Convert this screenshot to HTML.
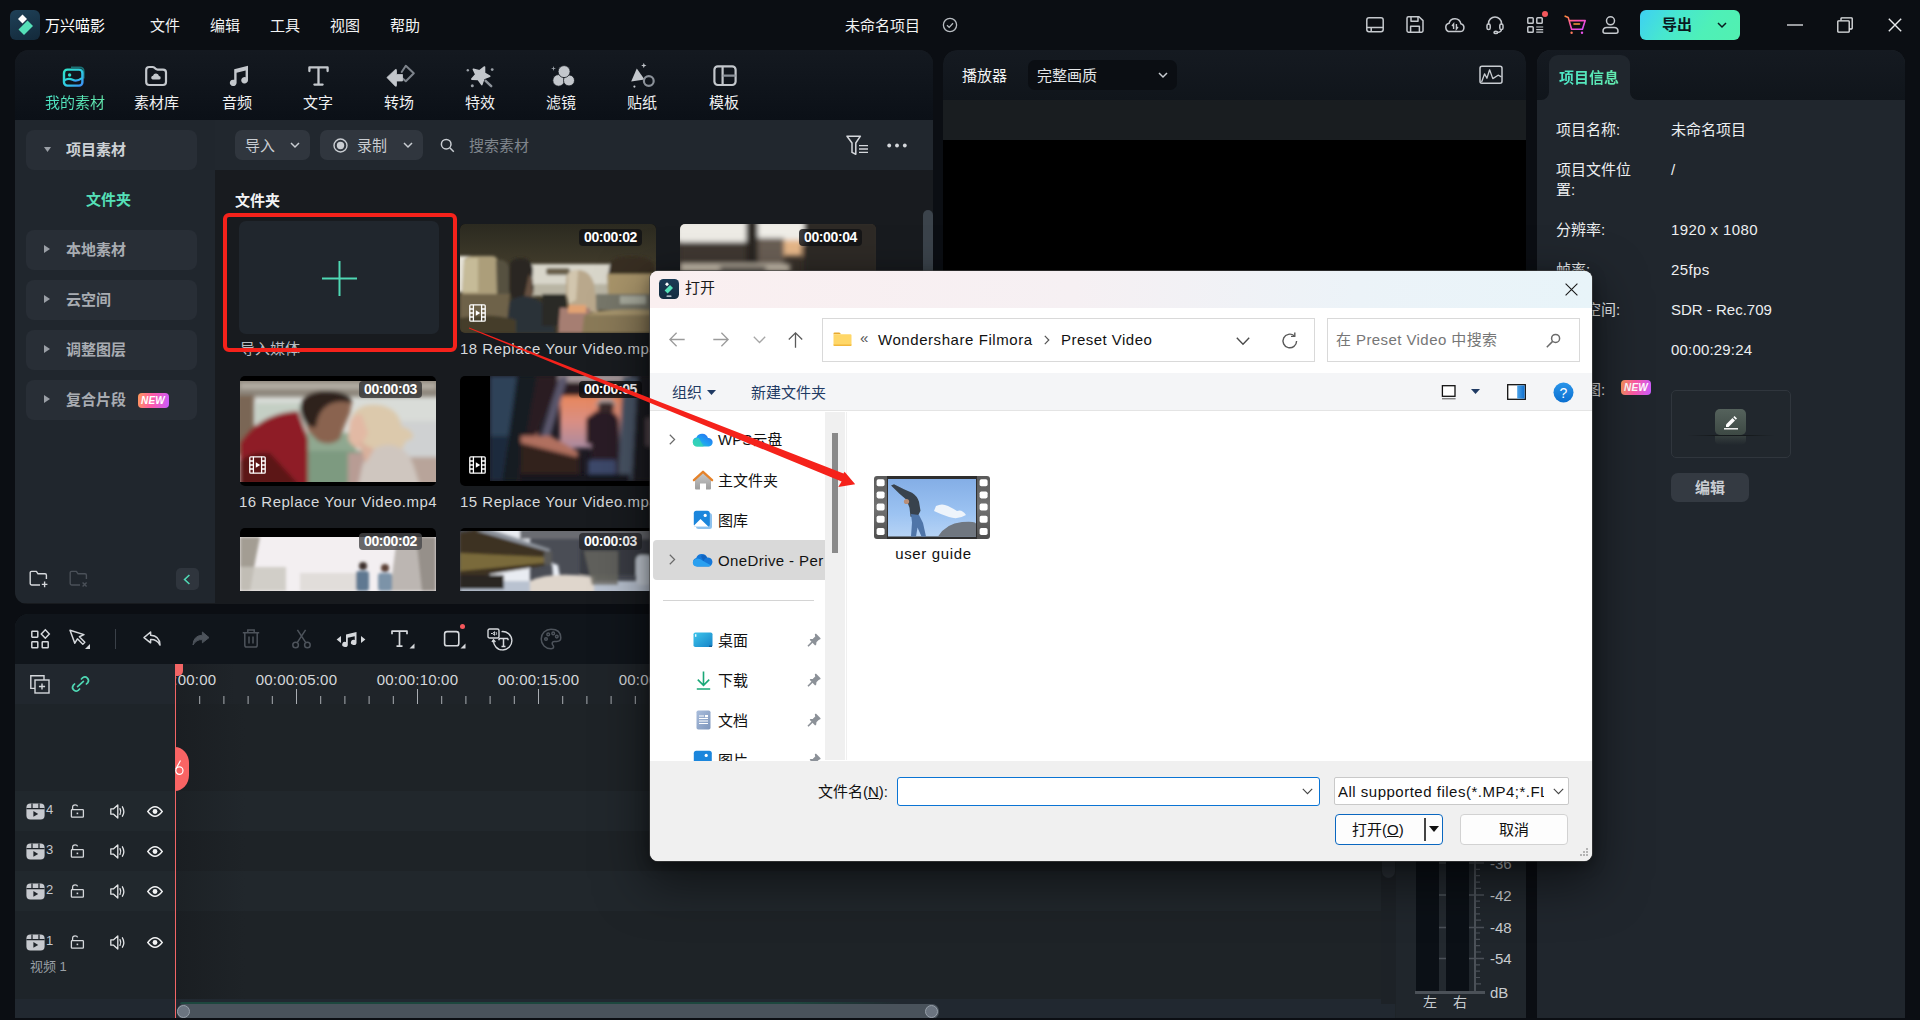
<!DOCTYPE html>
<html lang="zh-CN">
<head>
<meta charset="utf-8">
<title>万兴喵影</title>
<style>
*{box-sizing:border-box;margin:0;padding:0}
html,body{width:1920px;height:1020px;overflow:hidden;background:#0b0e13;}
body{position:relative;font-family:"Liberation Sans","Noto Sans CJK SC",sans-serif;color:#e6e8ea;font-size:15px;}
.abs{position:absolute}
.t{position:absolute;white-space:nowrap;line-height:1}
svg{position:absolute;overflow:visible}
/* ---------- top bar ---------- */
#logo{left:10px;top:10px;width:30px;height:30px;border-radius:6px;background:linear-gradient(160deg,#1f4158,#13293a);}
.menu{font-size:15px;color:#f2f3f4;top:18px}
/* ---------- media panel ---------- */
#media{left:15px;top:50px;width:918px;height:554px;border-radius:14px 14px 10px 12px;overflow:hidden;background:#181b1f;}
#mediaTabs{left:0;top:0;width:918px;height:70px;background:linear-gradient(180deg,#141920 0%,#0b1017 100%);}
#side{left:0;top:70px;width:200px;height:483px;background:#20262d;}
#toolbar{left:200px;top:70px;width:718px;height:50px;background:#21272e;}
.sbtn{left:11px;width:171px;height:40px;border-radius:8px;background:#282e36;}
.sbtn .t{left:40px;top:12px;font-size:15px;color:#c9cdd2;font-weight:500}
.tab{font-size:15px;color:#f0f1f2;top:45px;}
.pill{height:30px;border-radius:7px;background:#30363e;top:10px}
.thumb{border-radius:5px;overflow:hidden;background:#000}
.dur{position:absolute;right:14px;top:5px;width:63px;height:17px;text-align:center;border-radius:4px;background:rgba(16,18,20,.8);color:#fff;font-size:14px;font-weight:700;line-height:17px;letter-spacing:-0.4px}
.cap{font-size:15px;color:#d6d9dc;letter-spacing:.5px}
/* ---------- player ---------- */
#player{left:943px;top:50px;width:583px;height:560px;border-radius:14px 12px 0 0;overflow:hidden;background:#000}
#playerHead{left:0;top:0;width:584px;height:50px;background:linear-gradient(180deg,#151a21,#10151b)}
/* ---------- info panel ---------- */
#info{left:1537px;top:50px;width:368px;height:968px;border-radius:14px 14px 0 0;overflow:hidden;background:#20262d}
#infoHead{left:0;top:0;width:368px;height:50px;background:linear-gradient(180deg,#151a21,#10151b)}
.il{font-size:15px;color:#eceef0;left:19px}
.iv{font-size:15px;color:#eceef0;left:134px}
/* ---------- timeline ---------- */
#tl{left:15px;top:614px;width:1381px;height:404px;border-radius:14px 14px 0 0;overflow:hidden;background:#1e2428}
#tlBar{left:0;top:0;width:1381px;height:50px;background:#10151b}
/* ---------- dialog ---------- */
#dlg{left:650px;top:271px;width:942px;height:590px;border-radius:8px;overflow:hidden;background:#fff;color:#111;font-family:"Liberation Sans","Noto Sans CJK SC",sans-serif;box-shadow:0 0 0 1px rgba(70,70,70,.6),0 18px 50px 4px rgba(0,0,0,.5),0 4px 14px rgba(0,0,0,.35)}
.nl{font-size:15px;color:#111}
</style>
</head>
<body>
<!--TOPBAR-->
<div class="abs" id="logo"></div>
<svg style="left:10px;top:10px" width="30" height="30" viewBox="0 0 30 30"><path d="M12.5 4.6 L17 9.1 L12.5 13.6 L8 9.1Z" fill="#fff"/><path d="M17.5 10.5 L23 16 L14 25 L8.5 19.5Z" fill="#55e0b8"/></svg>
<div class="t" style="left:45px;top:18px;font-size:15px;color:#fff">万兴喵影</div>
<div class="t menu" style="left:150px">文件</div>
<div class="t menu" style="left:210px">编辑</div>
<div class="t menu" style="left:270px">工具</div>
<div class="t menu" style="left:330px">视图</div>
<div class="t menu" style="left:390px">帮助</div>
<div class="t" style="left:845px;top:18px;font-size:15px;color:#f2f3f4">未命名项目</div>
<svg style="left:942px;top:17px" width="16" height="16" viewBox="0 0 16 16" fill="none" stroke="#b9bdc2" stroke-width="1.3"><circle cx="8" cy="8" r="6.6"/><path d="M5 8.2l2.2 2.2L11 6.3"/></svg>
<!-- right icons -->
<svg style="left:1366px;top:17px" width="18" height="16" viewBox="0 0 18 16" fill="none" stroke="#c6c9ce" stroke-width="1.5"><rect x=".8" y=".8" width="16.4" height="14" rx="2.2"/><path d="M.8 10.6h16.4M5.2 10.6v4"/></svg>
<svg style="left:1406px;top:16px" width="18" height="17" viewBox="0 0 18 17" fill="none" stroke="#c6c9ce" stroke-width="1.5" stroke-linejoin="round"><path d="M1 2.2Q1 .8 2.4.8H13L17 4.600V14.800Q17 16.200 15.600 16.200H2.400Q1 16.200 1 14.800Z"/><path d="M5 .8v4.400h7V.8M4.600 16.200v-6h8.800v6"/></svg>
<svg style="left:1445px;top:16px" width="20" height="17" viewBox="0 0 20 17" fill="none" stroke="#c6c9ce" stroke-width="1.5"><path d="M5 15.600a4.200 4.200 0 0 1-.9-8.300a6 6 0 0 1 11.700.4a4 4 0 0 1-.7 7.900Z"/><path d="M8.600 13V8l-1.600 2M11.400 8v5l1.600-2" stroke-width="1.400"/></svg>
<svg style="left:1486px;top:16px" width="18" height="18" viewBox="0 0 18 18" fill="none" stroke="#c6c9ce" stroke-width="1.500"><path d="M2.500 8.500V7.500a6.500 6.500 0 0 1 13 0v1"/><rect x="1" y="8" width="3.200" height="5.600" rx="1.600"/><rect x="13.800" y="8" width="3.200" height="5.600" rx="1.600"/><path d="M15.400 13.600q0 2.700-4 2.900"/><ellipse cx="9.800" cy="16.400" rx="1.800" ry="1.100"/></svg>
<svg style="left:1527px;top:17px" width="17" height="17" viewBox="0 0 17 17" fill="none" stroke="#c6c9ce" stroke-width="1.500"><rect x=".8" y=".8" width="5.400" height="5.400" rx=".8"/><rect x="9.800" y=".8" width="5.400" height="5.400" rx=".8"/><rect x=".8" y="9.800" width="5.400" height="5.400" rx=".8"/><path d="M9.200 10h7M9.200 12.600h7M9.200 15.200h7" stroke-width="1.200"/></svg>
<div class="abs" style="left:1542px;top:11px;width:6px;height:6px;border-radius:50%;background:#f4575c"></div>
<svg style="left:1564px;top:15px" width="23" height="20" viewBox="0 0 23 20" fill="none" stroke-width="1.600" stroke-linecap="round" stroke-linejoin="round"><defs><linearGradient id="cg" x1="0" y1="0" x2="1" y2="1"><stop offset="0" stop-color="#ff8a3c"/><stop offset=".5" stop-color="#ff4fb4"/><stop offset="1" stop-color="#d44bff"/></linearGradient></defs><path d="M1.200 1.200l3 1.200l3.400 11.800h10.800l2.800-8.600H6" stroke="url(#cg)"/><path d="M10 9h5.500" stroke="#ff9a3c"/><circle cx="7.600" cy="17.800" r="1.200" fill="#ff7a5c" stroke="none"/><circle cx="18" cy="17.800" r="1.200" fill="#e650e6" stroke="none"/></svg>
<svg style="left:1602px;top:16px" width="17" height="18" viewBox="0 0 17 18" fill="none" stroke="#c6c9ce" stroke-width="1.500"><circle cx="8.500" cy="4.800" r="4"/><path d="M1 15.200q0-3.800 3.800-3.800h7.400q3.800 0 3.800 3.800q0 2-2 2H3q-2 0-2-2Z"/></svg>
<div class="abs" style="left:1640px;top:10px;width:100px;height:30px;border-radius:6px;background:linear-gradient(125deg,#3dd0f4 0%,#47e6d0 32%,#4ef0b8 65%,#52f0b0 100%)"></div>
<div class="t" style="left:1662px;top:17px;font-size:15px;font-weight:700;color:#0a1a1e">导出</div>
<svg style="left:1717px;top:22px" width="10" height="7" viewBox="0 0 10 7" fill="none" stroke="#0a1a1e" stroke-width="1.500"><path d="M1 1l4 4l4-4"/></svg>
<svg style="left:1787px;top:24px" width="16" height="2" viewBox="0 0 16 2"><path d="M0 1h16" stroke="#e8eaec" stroke-width="1.300"/></svg>
<svg style="left:1837px;top:17px" width="16" height="16" viewBox="0 0 16 16" fill="none" stroke="#e8eaec" stroke-width="1.300"><rect x=".8" y="3.800" width="11.400" height="11.400" rx=".8"/><path d="M4 3.600V1.600q0-.8.800-.8h9.600q.8 0 .8.800v9.600q0 .8-.8.800h-2"/></svg>
<svg style="left:1888px;top:18px" width="14" height="14" viewBox="0 0 14 14" fill="none" stroke="#e8eaec" stroke-width="1.400"><path d="M.8.800l12.400 12.400M13.200.8L.8 13.200"/></svg>
<!--/TOPBAR-->
<!--MEDIA-->
<div class="abs" id="media">
 <div class="abs" id="mediaTabs"></div>
 <div class="abs" id="side"></div>
 <div class="abs" id="toolbar"></div>
 <!-- tabs: coords relative to #media (abs x-15, y-50) -->
 <svg style="left:47px;top:16px" width="24" height="22" viewBox="0 0 24 22" fill="none"><defs><linearGradient id="tg" x1="0" y1="0" x2="1" y2="1"><stop offset="0" stop-color="#2fe3c8"/><stop offset=".6" stop-color="#2fc6e6"/><stop offset="1" stop-color="#3e8ff5"/></linearGradient></defs><path d="M9 1.200h8.500q4.300 0 4.300 4.300v7" stroke="#1e8f92" stroke-width="1.600" opacity=".75"/><rect x="2" y="3.600" width="18.400" height="16" rx="3.400" stroke="url(#tg)" stroke-width="2.400"/><circle cx="7.600" cy="9" r="1.700" fill="#2fdccb"/><path d="M2.400 14.200q4.200-2.600 8.200-.4t9.400-1.600" stroke="url(#tg)" stroke-width="2.200"/></svg>
 <div class="t tab" style="left:30px;color:#58dfb2;background:linear-gradient(90deg,#4ce6c8,#62e8ac);-webkit-background-clip:text;background-clip:text;-webkit-text-fill-color:transparent">我的素材</div>
 <svg style="left:129px;top:15px" width="24" height="22" viewBox="0 0 24 22" fill="none" stroke="#c3c7cc" stroke-width="2.200" stroke-linejoin="round"><path d="M2.200 5q0-3 3-3h3.200q1.400 0 2.400 1l.8.800q.8.800 2 .800h5.400q3 0 3 3v9.400q0 3-3 3H5.200q-3 0-3-3Z"/><path d="M8.600 14.600a2 2 0 0 1 .4-3.900a3.100 3.100 0 0 1 6 .3a1.800 1.800 0 0 1-.2 3.600Z" fill="#c3c7cc" stroke="none"/></svg>
 <div class="t tab" style="left:119px">素材库</div>
 <svg style="left:212px;top:15px" width="23" height="22" viewBox="0 0 23 22" fill="#c3c7cc"><path d="M7.200 4.200L21 .8v14.400a3.400 3.200 0 1 1-2.400-3V5.600L9.600 7.800v10a3.400 3.200 0 1 1-2.400-3Z"/></svg>
 <div class="t tab" style="left:207px">音频</div>
 <svg style="left:293px;top:16px" width="21" height="20" viewBox="0 0 21 20" fill="none" stroke="#c3c7cc" stroke-width="2.300" stroke-linecap="round" stroke-linejoin="round"><path d="M1.400 5V1.400h18.200V5M10.500 1.400v17.200M6.400 18.600h8.200"/></svg>
 <div class="t tab" style="left:288px">文字</div>
 <svg style="left:371px;top:14px" width="29" height="24" viewBox="0 0 29 24"><path d="M15.700 8l4.100-6.200l8 7.500l-8 8l-3.400-3" fill="none" stroke="#7d838b" stroke-width="2" stroke-linejoin="round" stroke-linecap="round"/><path d="M.9 13.500L9.200 5.700q1.300-.9 1.300.6v4.200h6v6.500h-6v4.400q0 1.500-1.300.6Z" fill="#c3c7cc" stroke="#c3c7cc" stroke-width=".8" stroke-linejoin="round"/></svg>
 <div class="t tab" style="left:369px">转场</div>
 <svg style="left:451px;top:14px" width="28" height="24" viewBox="0 0 28 24"><path d="M18.5 3.0L18.5 9.2L23.7 12.3L17.9 14.5L15.8 20.6L12.2 15.5L5.8 15.1L9.8 10.4L7.4 5.3L13.4 6.8Z" fill="#c3c7cc" stroke="#c3c7cc" stroke-width="1.600" stroke-linejoin="round"/><path d="M19.600 16.900l5.600 5.300" stroke="#8d939b" stroke-width="2.500" stroke-linecap="round"/><circle cx="1.800" cy="6.200" r="1.200" fill="#9aa0a7"/><circle cx="26.200" cy="5.600" r="1.400" fill="#9aa0a7"/><circle cx="6.300" cy="21.700" r="1.500" fill="#9aa0a7"/></svg>
 <div class="t tab" style="left:450px">特效</div>
 <svg style="left:533px;top:14px" width="28" height="24" viewBox="0 0 28 24" fill="#c3c7cc" stroke="#0f141a" stroke-width=".8"><circle cx="10.600" cy="16.400" r="5.800"/><circle cx="21" cy="16.400" r="5.500"/><circle cx="16.100" cy="7.600" r="6"/><path d="M5.500 2l.6 1.900l1.900.6l-1.900.6l-.6 1.900l-.6-1.900l-1.900-.6l1.900-.6Z" fill="#9aa0a7" stroke="none"/></svg>
 <div class="t tab" style="left:531px">滤镜</div>
 <svg style="left:614px;top:12px" width="28" height="26" viewBox="0 0 28 26"><path d="M7.800 6.500L15.500 17.500L2.200 19.600Z" fill="#c3c7cc"/><circle cx="19.800" cy="19" r="4.900" fill="none" stroke="#8a9098" stroke-width="2.200"/><path d="M14.800.8l.7 2l2 .7l-2 .7l-.7 2l-.7-2l-2-.7l2-.7Z" fill="#c3c7cc"/><circle cx="5.400" cy="24.600" r="1.100" fill="#c3c7cc"/></svg>
 <div class="t tab" style="left:612px">贴纸</div>
 <svg style="left:698px;top:15px" width="24" height="22" viewBox="0 0 24 22" fill="none" stroke="#c3c7cc" stroke-width="2.200"><rect x="1.400" y="1.400" width="21.200" height="18.600" rx="3.400"/><path d="M9.600 1.400v18.600"/><path d="M9.600 10.700h13" stroke="#8a9098"/></svg>
 <div class="t tab" style="left:694px">模板</div>
 <!-- sidebar -->
 <div class="abs sbtn" style="top:80px"><svg style="left:18px;top:17px" width="7" height="5" viewBox="0 0 7 5"><path d="M0 0h7L3.500 5Z" fill="#9a9fa6"/></svg><div class="t" style="font-weight:700;color:#cdd1d5">项目素材</div></div>
 <div class="t" style="left:71px;top:142px;font-size:15px;font-weight:700;color:#55e0b8">文件夹</div>
 <div class="abs sbtn" style="top:180px"><svg style="left:18px;top:15px" width="6" height="8" viewBox="0 0 6 8"><path d="M0 0v8L6 4Z" fill="#9a9fa6"/></svg><div class="t" style="color:#a8acb2;font-weight:700">本地素材</div></div>
 <div class="abs sbtn" style="top:230px"><svg style="left:18px;top:15px" width="6" height="8" viewBox="0 0 6 8"><path d="M0 0v8L6 4Z" fill="#9a9fa6"/></svg><div class="t" style="color:#a8acb2;font-weight:700">云空间</div></div>
 <div class="abs sbtn" style="top:280px"><svg style="left:18px;top:15px" width="6" height="8" viewBox="0 0 6 8"><path d="M0 0v8L6 4Z" fill="#9a9fa6"/></svg><div class="t" style="color:#a8acb2;font-weight:700">调整图层</div></div>
 <div class="abs sbtn" style="top:330px"><svg style="left:18px;top:15px" width="6" height="8" viewBox="0 0 6 8"><path d="M0 0v8L6 4Z" fill="#9a9fa6"/></svg><div class="t" style="color:#a8acb2;font-weight:700">复合片段</div>
  <div class="abs" style="left:112px;top:13px;width:31px;height:15px;border-radius:4px;background:linear-gradient(100deg,#ff9a5a 0%,#ff5aa8 45%,#c85cff 100%)"></div>
  <div class="t" style="left:115px;top:16px;font-size:10px;font-weight:700;font-style:italic;color:#fff;letter-spacing:.2px">NEW</div></div>
 <svg style="left:14px;top:520px" width="20" height="18" viewBox="0 0 20 18" fill="none" stroke="#d5d8dc" stroke-width="1.400" stroke-linejoin="round"><path d="M17.400 9V5.200q0-1.400-1.400-1.400H9L7.400 1.400H2.600Q1.200 1.400 1.200 2.800v10.800q0 1.400 1.400 1.400H11"/><path d="M15.600 11.600v5.600M12.800 14.400h5.600"/></svg>
 <svg style="left:54px;top:520px" width="20" height="18" viewBox="0 0 20 18" fill="none" stroke="#4a5058" stroke-width="1.400" stroke-linejoin="round"><path d="M17.400 9V5.200q0-1.400-1.400-1.400H9L7.400 1.400H2.600Q1.200 1.400 1.200 2.800v10.800q0 1.400 1.400 1.400H11"/><path d="M13.600 12.400l4 4M17.600 12.400l-4 4"/></svg>
 <div class="abs" style="left:161px;top:518px;width:23px;height:22px;border-radius:5px;background:#2f353d"></div>
 <svg style="left:168px;top:524px" width="8" height="11" viewBox="0 0 8 11" fill="none" stroke="#4fd8b4" stroke-width="1.600"><path d="M6.400 1L1.600 5.500L6.400 10"/></svg>
 <!-- toolbar -->
 <div class="abs pill" style="left:220px;top:80px;width:75px"></div>
 <div class="t" style="left:230px;top:88px;font-size:15px;color:#c9cdd2">导入</div>
 <svg style="left:275px;top:92px" width="10" height="7" viewBox="0 0 10 7" fill="none" stroke="#c9cdd2" stroke-width="1.500"><path d="M1 1l4 4l4-4"/></svg>
 <div class="abs pill" style="left:305px;top:80px;width:103px"></div>
 <svg style="left:318px;top:88px" width="15" height="15" viewBox="0 0 15 15"><circle cx="7.500" cy="7.500" r="6.500" fill="none" stroke="#c9cdd2" stroke-width="1.400"/><circle cx="7.500" cy="7.500" r="3.700" fill="#c9cdd2"/></svg>
 <div class="t" style="left:342px;top:88px;font-size:15px;color:#c9cdd2">录制</div>
 <svg style="left:388px;top:92px" width="10" height="7" viewBox="0 0 10 7" fill="none" stroke="#c9cdd2" stroke-width="1.500"><path d="M1 1l4 4l4-4"/></svg>
 <svg style="left:425px;top:88px" width="15" height="15" viewBox="0 0 15 15" fill="none" stroke="#c9cdd2" stroke-width="1.500"><circle cx="6.200" cy="6.200" r="4.800"/><path d="M9.800 9.800l4 4"/></svg>
 <div class="t" style="left:454px;top:88px;font-size:15px;color:#7f858c">搜索素材</div>
 <svg style="left:831px;top:85px" width="24" height="21" viewBox="0 0 24 21" fill="none" stroke="#d5d8dc" stroke-width="1.500" stroke-linejoin="round"><path d="M1 1.200h13.400L9.800 8v11.200L6 17.400V8Z"/><path d="M13 10.600h9M13 14h9M13 17.400h9" stroke-width="1.400"/></svg>
 <svg style="left:872px;top:93px" width="20" height="5" viewBox="0 0 20 5" fill="#d5d8dc"><circle cx="2.200" cy="2.500" r="1.900"/><circle cx="10" cy="2.500" r="1.900"/><circle cx="17.800" cy="2.500" r="1.900"/></svg>
 <!-- content -->
 <div class="t" style="left:220px;top:143px;font-size:15px;font-weight:700;color:#f2f3f4">文件夹</div>
<!--THUMBS-->
 <!-- import tile (coords relative to #media) -->
 <div class="abs" style="left:224px;top:171px;width:200px;height:113px;border-radius:7px;background:#20262d"></div>
 <svg style="left:307px;top:211px" width="35" height="35" viewBox="0 0 35 35"><path d="M17.500 0v35M0 17.500h35" stroke="#4fd8b4" stroke-width="2"/></svg>
 <div class="t cap" style="left:225px;top:291px;color:#b9bdc2;font-size:15px;letter-spacing:0">导入媒体</div>
 <!-- thumb 1 : car interior -->
 <div class="abs thumb" style="left:445px;top:174px;width:196px;height:109px">
  <svg style="overflow:hidden;left:0;top:0" width="196" height="109" viewBox="0 0 196 109"><defs><filter id="b1" x="-10%" y="-10%" width="120%" height="120%"><feGaussianBlur stdDeviation="1.500"/></filter><linearGradient id="c1" x1="0" y1="0" x2="0" y2="1"><stop offset="0" stop-color="#2b2a20"/><stop offset=".35" stop-color="#3f3a2a"/><stop offset="1" stop-color="#3a3426"/></linearGradient></defs>
   <rect width="196" height="109" fill="url(#c1)"/>
   <g filter="url(#b1)">
    <rect x="68" y="40" width="84" height="32" fill="#d8d6ca"/>
    <rect x="70" y="60" width="80" height="12" fill="#b9b5a4"/>
    <rect x="-2" y="32" width="14" height="36" fill="#e6e3d8"/>
    <path d="M4 36q2-4 10-4h18q6 0 6 8v30H2Z" fill="#ac9e7a"/>
    <path d="M4 38q2-4 8-4h6v34H3Z" fill="#c6bb98"/>
    <path d="M36 36q10-2 14 8v28H37Z" fill="#575140"/>
    <rect x="86" y="44" width="24" height="7" rx="3" fill="#6a604c"/>
    <path d="M49 44q0-10 12-10q11 0 12 12l-1 10l2 8l-3 10q-6 6-14 4q-8-4-8-14Z" fill="#292520"/>
    <path d="M69 50l4 6l-1 8l2 4l-4 8l-6-2Z" fill="#65503f"/>
    <path d="M46 86q2-14 20-14q16 2 24 18l6 19H46Z" fill="#2c3237"/>
    <path d="M0 70h50l-4 39H0Z" fill="#6e6248"/>
    <path d="M0 94q30-6 56 2v13H0Z" fill="#453c2c"/>
    <rect x="82" y="70" width="24" height="32" fill="#292925"/>
    <path d="M106 56q0-10 12-10t16 14l4 28h-28q-2-12-4-18Z" fill="#b9a88c"/>
    <path d="M108 50q4-4 10-4l-2 30l-8 4Z" fill="#d2c6ae"/>
    <path d="M100 84h30v25h-32Z" fill="#a67e72"/>
    <path d="M108 81h18v8h-18Z" fill="#e2a272"/>
    <path d="M150 40q2-8 22-8t22 10v10h-46Z" fill="#382f20"/>
    <path d="M147 50h49v20h-48Z" fill="#a8946a"/>
    <rect x="136" y="70" width="60" height="16" fill="#77776a"/>
    <rect x="160" y="72" width="26" height="8" fill="#a9ab9e"/>
    <path d="M124 92q10-8 72-6v23h-74Z" fill="#8a7a58"/>
    <path d="M128 90q20-6 68-4v5h-66Z" fill="#a8966e"/>
   </g></svg>
  <div class="dur">00:00:02</div>
 </div>
 <div class="t cap" style="left:445px;top:291px">18 Replace Your Video.mp4</div>
 <!-- thumb 2 : room -->
 <div class="abs thumb" style="left:665px;top:174px;width:196px;height:109px">
  <svg style="overflow:hidden;left:0;top:0" width="196" height="109" viewBox="0 0 196 109"><defs><filter id="b2" x="-10%" y="-10%" width="120%" height="120%"><feGaussianBlur stdDeviation="2.500"/></filter></defs>
   <rect width="196" height="109" fill="#3a332c"/>
   <g filter="url(#b2)">
    <rect x="-4" y="-4" width="70" height="22" fill="#eeece6"/>
    <rect x="78" y="-4" width="46" height="24" fill="#f0eee8"/>
    <rect x="104" y="16" width="18" height="16" fill="#e9b98a"/>
    <rect x="0" y="18" width="78" height="22" fill="#3f3831"/>
    <rect x="66" y="-4" width="12" height="50" fill="#2c2723"/>
    <rect x="78" y="14" width="26" height="30" fill="#6a5f55"/>
    <rect x="124" y="-4" width="76" height="60" fill="#2e2925"/>
    <rect x="0" y="40" width="110" height="8" fill="#cfc5b4"/>
    <rect x="40" y="43" width="46" height="4" fill="#15161a"/>
   </g></svg>
  <div class="dur">00:00:04</div>
 </div>
 <!-- thumb 3 : couple -->
 <div class="abs thumb" style="left:225px;top:326px;width:196px;height:110px">
  <svg style="overflow:hidden;left:0;top:5px" width="196" height="101" viewBox="0 0 196 101"><defs><filter id="b3" x="-10%" y="-10%" width="120%" height="120%"><feGaussianBlur stdDeviation="2.200"/></filter></defs>
   <rect width="196" height="101" fill="#d9dcd8"/>
   <g filter="url(#b3)">
    <rect x="-4" y="-4" width="204" height="20" fill="#8d867c"/>
    <rect x="0" y="2" width="196" height="6" fill="#b4aea4"/>
    <rect x="-4" y="14" width="18" height="60" fill="#7a6654"/>
    <rect x="16" y="22" width="50" height="30" fill="#c4cfc4"/>
    <path d="M66 52h50v53H66Z" fill="#8fa890"/>
    <path d="M66 70h60v35H66Z" fill="#7d9a80"/>
    <rect x="108" y="72" width="40" height="33" fill="#b89c94"/>
    <rect x="160" y="40" width="40" height="40" fill="#cfd1d2"/>
    <rect x="166" y="76" width="34" height="29" fill="#b8a49a"/>
    <path d="M0 62q20-30 58-32l10 28v47H0Z" fill="#8e1f25"/>
    <path d="M0 80q10-10 30-8l30 33H0Z" fill="#5c1418"/>
    <path d="M60 26q4-16 24-16t28 10l-2 12l-6 14l-4 12q-10 8-22 2l-10-10Z" fill="#8a6450"/>
    <path d="M60 28q2-18 26-18t26 12q-14-4-24 2t-12 22q-12 2-16-18Z" fill="#2e231d"/>
    <path d="M112 36q6-14 26-12t24 22q6 0 10 6t-6 8q-4 12-14 14l-14-2q-18-4-26-14Z" fill="#dcc9ac"/>
    <path d="M110 40q4-8 12-6l6 18l-8 16q-8-2-12-10Z" fill="#e2b9a4"/>
    <path d="M122 86q6-22 28-22q18 2 24 22l6 19h-62Z" fill="#cfc6bf"/>
    <path d="M118 60l16 8l-8 14Z" fill="#d9b09c"/>
   </g></svg>
  <div class="dur" style="background:rgba(52,52,52,.82)">00:00:03</div>
 </div>
 <div class="t cap" style="left:224px;top:444px">16 Replace Your Video.mp4</div>
 <!-- thumb 4 : sunset -->
 <div class="abs thumb" style="left:445px;top:326px;width:196px;height:110px">
  <svg style="overflow:hidden;left:30px;top:0" width="166" height="105" viewBox="0 0 166 105"><defs><filter id="b4" x="-10%" y="-10%" width="120%" height="120%"><feGaussianBlur stdDeviation="2"/></filter><linearGradient id="s4" x1="0" y1="0" x2="0" y2="1"><stop offset="0" stop-color="#e8875c"/><stop offset=".5" stop-color="#d98f84"/><stop offset="1" stop-color="#a98aa0"/></linearGradient></defs>
   <rect width="166" height="105" fill="#1d1a22"/>
   <g filter="url(#b4)">
    <rect x="70" y="20" width="70" height="52" fill="url(#s4)"/>
    <rect x="37" y="26" width="11" height="34" fill="#dc8a78"/>
    <path d="M0 0h27L14 105H0Z" fill="#2e4258"/>
    <path d="M0 60h18l-6 45H0Z" fill="#1f2c3c"/>
    <path d="M27 0h20L30 105H12Z" fill="#191a24"/>
    <path d="M47 0h26L46 60l-8 45H28Z" fill="#2a1d24"/>
    <rect x="68" y="-2" width="72" height="8" fill="#a89a9c"/>
    <rect x="52" y="6" width="90" height="14" fill="#2a1c20"/>
    <path d="M70 0h8L60 62H50Z" fill="#5a566c"/>
    <path d="M31 62l58 16v27H31Z" fill="#33201e"/>
    <path d="M31 60l30 0l28 16l-2 5l-56-14Z" fill="#b0705e"/>
    <path d="M96 44q2-6 8-4l3 28h-11Z" fill="#2b1d24"/>
    <path d="M100 42q2-8 14-8t15 10l1 30l-2 31h-24l-3-30Z" fill="#2a1f26"/>
    <path d="M105 30h22l-5-8h-12Z" fill="#b5a4a0"/>
    <rect x="108" y="26" width="16" height="10" rx="4" fill="#3a2a2c"/>
    <rect x="98" y="84" width="28" height="21" fill="#3d4a6a"/>
    <path d="M133 0h15l-6 105h-14Z" fill="#4a5466"/>
    <path d="M148 0h18v105h-24Z" fill="#1e1b24"/>
    <rect x="156" y="42" width="10" height="28" fill="#5c4e54"/>
    <rect x="30" y="98" width="110" height="8" fill="#15121a"/>
   </g></svg>
  <div class="dur" style="background:rgba(12,12,14,.8)">00:00:05</div>
 </div>
 <div class="t cap" style="left:445px;top:444px">15 Replace Your Video.mp4</div>
 <!-- thumb 5 : winter walk -->
 <div class="abs thumb" style="left:225px;top:478px;width:196px;height:63px;border-radius:5px 5px 0 0">
  <svg style="overflow:hidden;left:0;top:9px" width="196" height="66" viewBox="0 0 196 66"><defs><filter id="b5" x="-10%" y="-10%" width="120%" height="120%"><feGaussianBlur stdDeviation="1.600"/></filter></defs>
   <rect width="196" height="66" fill="#f3eff1"/>
   <g filter="url(#b5)">
    <path d="M0 0h20l-4 20l-6 34H0Z" fill="#8f8a7c" opacity=".8"/>
    <path d="M0 30h46v24H0Z" fill="#c9c5be" opacity=".8"/>
    <path d="M156 8q14-12 40-8v54h-46Z" fill="#aaa39c" opacity=".75"/>
    <path d="M176 0h20v54h-14Z" fill="#7d766e" opacity=".6"/>
    <rect x="60" y="36" width="60" height="18" fill="#dcd8d5" opacity=".8"/>
    <rect x="116" y="34" width="13" height="20" rx="3" fill="#5f7891"/>
    <circle cx="123" cy="29" r="4" fill="#3a2f2a"/>
    <rect x="138" y="36" width="14" height="18" rx="3" fill="#7c93a8"/>
    <circle cx="145" cy="31" r="4" fill="#5a4034"/>
   </g></svg>
  <div class="dur" style="background:rgba(70,70,72,.8)">00:00:02</div>
 </div>
 <!-- thumb 6 : bottle -->
 <div class="abs thumb" style="left:445px;top:478px;width:196px;height:63px;border-radius:5px 5px 0 0">
  <svg style="overflow:hidden;left:0;top:3px" width="196" height="72" viewBox="0 0 196 72"><defs><filter id="b6" x="-10%" y="-10%" width="120%" height="120%"><feGaussianBlur stdDeviation="1.800"/></filter></defs>
   <rect width="196" height="72" fill="#4a4d55"/>
   <g filter="url(#b6)">
    <rect x="30" y="-4" width="40" height="60" fill="#e9ecf2"/>
    <rect x="60" y="-2" width="130" height="10" fill="#6a6c72"/>
    <rect x="120" y="8" width="80" height="36" fill="#3a3d45"/>
    <path d="M0 2l20-4l68 22v14L0 48Z" fill="#3e3320"/>
    <path d="M0 22l84 4v6L0 40Z" fill="#7a6a3a"/>
    <path d="M16 0l70 20l4 0v-2L30-2Z" fill="#8d939c"/>
    <rect x="84" y="20" width="8" height="14" rx="2" fill="#5a5a58"/>
    <path d="M92 32l6 2l4 24h-8Z" fill="#e8edf4"/>
    <rect x="0" y="50" width="196" height="26" fill="#b9c2d0"/>
    <path d="M70 50q20-10 64-4v26H70Z" fill="#dfd6cc"/>
    <rect x="176" y="24" width="16" height="30" rx="5" fill="#c9d0da"/>
    <path d="M124 20h34v34h-26Z" fill="#6c6a62" opacity=".8"/>
    <rect x="0" y="44" width="44" height="14" fill="#2c2620"/>
   </g></svg>
  <div class="dur" style="background:rgba(40,42,46,.82)">00:00:03</div>
 </div>
 <svg style="left:454px;top:254px" width="17" height="18" viewBox="0 0 17 18" fill="none" stroke="#fff" stroke-width="1.300"><rect x=".8" y=".8" width="15.400" height="16.400" rx="1"/><path d="M4.400.8v16.400M12.600.8v16.400M.8 5h3.600M.8 9h3.600M.8 13h3.600M12.600 5h3.600M12.600 9h3.600M12.600 13h3.600"/><path d="M6.800 6.200v5.600l4.400-2.800Z" fill="#fff" stroke="none"/></svg>
 <svg style="left:234px;top:406px" width="17" height="18" viewBox="0 0 17 18" fill="none" stroke="#fff" stroke-width="1.300"><rect x=".8" y=".8" width="15.400" height="16.400" rx="1"/><path d="M4.400.8v16.400M12.600.8v16.400M.8 5h3.600M.8 9h3.600M.8 13h3.600M12.600 5h3.600M12.600 9h3.600M12.600 13h3.600"/><path d="M6.800 6.200v5.600l4.400-2.800Z" fill="#fff" stroke="none"/></svg>
 <svg style="left:454px;top:406px" width="17" height="18" viewBox="0 0 17 18" fill="none" stroke="#fff" stroke-width="1.300"><rect x=".8" y=".8" width="15.400" height="16.400" rx="1"/><path d="M4.400.8v16.400M12.600.8v16.400M.8 5h3.600M.8 9h3.600M.8 13h3.600M12.600 5h3.600M12.600 9h3.600M12.600 13h3.600"/><path d="M6.800 6.200v5.600l4.400-2.800Z" fill="#fff" stroke="none"/></svg>
<!--/THUMBS-->
 <div class="abs" style="left:908px;top:160px;width:10px;height:393px;border-radius:5px 5px 0 0;background:#3b434b"></div>
</div>
<!--/MEDIA-->
<!--PLAYER-->
<div class="abs" id="player">
 <div class="abs" id="playerHead"></div>
 <div class="abs" style="left:0;top:50px;width:584px;height:40px;background:#191d20"></div>
 <div class="t" style="left:19px;top:18px;font-size:15px;color:#f2f3f4">播放器</div>
 <div class="abs" style="left:85px;top:10px;width:149px;height:30px;border-radius:7px;background:#0b0e13"></div>
 <div class="t" style="left:94px;top:18px;font-size:15px;color:#e4e6e8">完整画质</div>
 <svg style="left:215px;top:22px" width="10" height="7" viewBox="0 0 10 7" fill="none" stroke="#c9cdd2" stroke-width="1.500"><path d="M1 1l4 4l4-4"/></svg>
 <svg style="left:536px;top:15px" width="24" height="20" viewBox="0 0 24 20" fill="none" stroke="#c9cdd2" stroke-width="1.500" stroke-linejoin="round"><rect x="1" y="1.200" width="22" height="17" rx="2"/><path d="M2.600 17l3-8.200l2.300 4.400l2.700-8.400l3.200 8.800l5.300-3.400l3.300 1.600" stroke-width="1.300"/></svg>
</div>
<!--/PLAYER-->
<!--INFO-->
<div class="abs" id="info">
 <div class="abs" id="infoHead"></div>
 <div class="abs" style="left:12px;top:5px;width:81px;height:45px;border-radius:9px 9px 0 0;background:#20262d"></div>
 <svg style="left:4px;top:42px" width="8" height="8" viewBox="0 0 8 8"><path d="M8 0v8H0A8 8 0 0 0 8 0Z" fill="#20262d"/></svg>
 <svg style="left:93px;top:42px" width="8" height="8" viewBox="0 0 8 8"><path d="M0 0v8h8A8 8 0 0 1 0 0Z" fill="#20262d"/></svg>
 <div class="t" style="left:22px;top:20px;font-size:15px;font-weight:700;background:linear-gradient(90deg,#4ce6c8,#62e8ac);-webkit-background-clip:text;background-clip:text;-webkit-text-fill-color:transparent;color:#58dfb2">项目信息</div>
 <div class="t il" style="top:72px">项目名称:</div><div class="t iv" style="top:72px">未命名项目</div>
 <div class="t il" style="top:112px">项目文件位</div><div class="t il" style="top:132px">置:</div><div class="t iv" style="top:112px">/</div>
 <div class="t il" style="top:172px">分辨率:</div><div class="t iv" style="top:172px;letter-spacing:.4px">1920 x 1080</div>
 <div class="t il" style="top:212px">帧率:</div><div class="t iv" style="top:212px;letter-spacing:.4px">25fps</div>
 <div class="t il" style="top:252px">色彩空间:</div><div class="t iv" style="top:252px">SDR - Rec.709</div>
 <div class="t il" style="top:292px">时长:</div><div class="t iv" style="top:292px;letter-spacing:.18px">00:00:29:24</div>
 <div class="t il" style="top:332px">缩略图:</div>
 <div class="abs" style="left:84px;top:330px;width:30px;height:15px;border-radius:4px;background:linear-gradient(100deg,#ff9a5a 0%,#ff5aa8 45%,#c85cff 100%)"></div>
 <div class="t" style="left:87px;top:333px;font-size:10px;font-weight:700;font-style:italic;color:#fff;letter-spacing:.2px">NEW</div>
 <div class="abs" style="left:134px;top:340px;width:120px;height:68px;border-radius:5px;border:1px solid #30363d;background:#21272d"></div>
 <div class="abs" style="left:178px;top:359px;width:31px;height:26px;border-radius:5px;background:linear-gradient(180deg,#55625c,#3d4944)"></div>
 <svg style="left:186px;top:365px" width="16" height="15" viewBox="0 0 16 15"><path d="M3 9.500l6.500-6.500l2.500 2.500L5.500 12H3Z" fill="#fff"/><path d="M10.300 2.200l1.200-1.200l2.500 2.500l-1.200 1.200Z" fill="#fff"/><path d="M1 13.800h14" stroke="#fff" stroke-width="1.400"/></svg>
 <div class="abs" style="left:150px;top:385px;width:88px;height:1px;background:linear-gradient(90deg,rgba(90,100,100,0),rgba(20,24,26,.9) 30%,rgba(20,24,26,.9) 70%,rgba(90,100,100,0))"></div>
 <div class="abs" style="left:178px;top:386px;width:31px;height:9px;border-radius:0 0 5px 5px;background:linear-gradient(180deg,rgba(70,82,76,.55),rgba(70,82,76,0))"></div>
 <div class="abs" style="left:134px;top:423px;width:78px;height:29px;border-radius:7px;background:#343a42"></div>
 <div class="t" style="left:158px;top:430px;font-size:15px;font-weight:700;color:#c9cdd2">编辑</div>
</div>
<!--/INFO-->
<!--TIMELINE-->
<div class="abs" id="tl">
 <div class="abs" id="tlBar"></div>
 <div class="abs" style="left:0;top:50px;width:160px;height:40px;background:#21272e"></div>
 <div class="abs" style="left:160px;top:50px;width:1220px;height:40px;background:linear-gradient(90deg,#1b1f23 0,#1f2429 60px,#1f2429 100%)"></div>
 <div class="abs" style="left:0;top:90px;width:160px;height:315px;background:#1e2429"></div>
 <div class="abs" style="left:160px;top:90px;width:1220px;height:315px;background:linear-gradient(90deg,#1a1e22 0,#1e2327 70px,#1e2327 100%)"></div>
 <div class="abs" style="left:0;top:177px;width:160px;height:40px;background:#21282d"></div>
 <div class="abs" style="left:160px;top:177px;width:1220px;height:40px;background:linear-gradient(90deg,#1c2125 0,#21272c 70px,#21272c 100%)"></div>
 <div class="abs" style="left:0;top:257px;width:160px;height:40px;background:#21282d"></div>
 <div class="abs" style="left:160px;top:257px;width:1220px;height:40px;background:linear-gradient(90deg,#1c2125 0,#21272c 70px,#21272c 100%)"></div>
 <div class="abs" style="left:0;top:385px;width:1380px;height:20px;background:#212830"></div>
 <svg style="left:16px;top:15px" width="19" height="20" viewBox="0 0 19 20" fill="none" stroke="#d5d8dc" stroke-width="1.500"><rect x=".8" y="2.200" width="6" height="6" rx=".6"/><path d="M14.300 .8l4 4.200l-4 4.200l-4-4.200Z"/><rect x=".8" y="12.800" width="6" height="6" rx=".6"/><rect x="11.200" y="12.800" width="6" height="6" rx=".6"/></svg>
 <svg style="left:54px;top:15px" width="22" height="21" viewBox="0 0 22 21" fill="none" stroke="#d5d8dc" stroke-width="1.500" stroke-linejoin="round"><path d="M1 1.200l4.800 13l2.600-4.400l5.400 5.400l2-2l-5.400-5.400l4.600-2.200Z"/><path d="M21 15v5h-5Z" fill="#d5d8dc" stroke="none"/></svg>
 <div class="abs" style="left:100px;top:15px;width:1px;height:20px;background:#3a4048"></div>
 <svg style="left:128px;top:17px" width="18" height="15" viewBox="0 0 18 15" fill="none" stroke="#d5d8dc" stroke-width="1.500" stroke-linejoin="round"><path d="M7.600 1L1 6.600l6.600 5.200V8.600q6-.4 9.400 5.400q-.4-9.400-9.400-9.800Z"/></svg>
 <svg style="left:177px;top:17px" width="18" height="15" viewBox="0 0 18 15" fill="#4d535b" stroke="#4d535b" stroke-width="1" stroke-linejoin="round"><path d="M10.400 1L17 6.600l-6.600 5.200V8.600q-6-.4-9.400 5.400q.4-9.400 9.400-9.800Z"/></svg>
 <svg style="left:227px;top:15px" width="18" height="19" viewBox="0 0 18 19" fill="none" stroke="#4d535b" stroke-width="1.500"><path d="M.8 3.800h16.400M5.800 3.800V1h6.400v2.800M2.800 3.800v12.400q0 1.800 1.800 1.800h8.800q1.800 0 1.800-1.800V3.800M7 7.400v7M11 7.400v7"/></svg>
 <svg style="left:277px;top:15px" width="19" height="20" viewBox="0 0 19 20" fill="none" stroke="#4d535b" stroke-width="1.500"><circle cx="3.600" cy="16" r="2.800"/><circle cx="15.400" cy="16" r="2.800"/><path d="M5.200 13.600L13.600 .8M13.800 13.600L5.400 .8"/></svg>
 <svg style="left:321px;top:17px" width="30" height="17" viewBox="0 0 30 17" fill="#d5d8dc"><path d="M10 3.400L20.500 1v10.400a2.800 2.600 0 1 1-1.800-2.400V5.200L11.800 6.800v6.600a2.800 2.600 0 1 1-1.800-2.400Z"/><path d="M5 5v7L.6 8.500Z"/><path d="M25 5v7l4.400-3.500Z"/></svg>
 <svg style="left:376px;top:16px" width="24" height="19" viewBox="0 0 24 19" fill="none" stroke="#d5d8dc" stroke-width="1.700" stroke-linejoin="round"><path d="M1 4.200V1.200h15v3M8.500 1.200v15M5.500 16.200h6"/><path d="M23.500 13.500v5h-5Z" fill="#d5d8dc" stroke="none"/></svg>
 <svg style="left:427px;top:15px" width="24" height="20" viewBox="0 0 24 20" fill="none" stroke="#d5d8dc" stroke-width="1.600"><rect x="2.600" y="2.600" width="14.200" height="14.200" rx="2.400"/><path d="M23.500 14.500v5h-5Z" fill="#d5d8dc" stroke="none"/></svg>
 <div class="abs" style="left:445px;top:10px;width:5px;height:5px;border-radius:50%;background:#f4575c"></div>
 <svg style="left:472px;top:14px" width="28" height="23" viewBox="0 0 28 23" fill="none" stroke="#d5d8dc" stroke-width="1.400"><rect x="1" y="1" width="11" height="9" rx="1.600"/><path d="M4 5.500h1.600l2-1.800v3.600l-2-1.800M9.200 4.200q.8 1.300 0 2.600" stroke-width="1"/><path d="M14.500 3.600a9.200 9.200 0 1 1-8 8.400"/><path d="M5 14l1.500-2.200L8.400 14" /><path d="M12 10.400h9M16.500 10.400v8M14.500 18.400h4M12 10.400v1.800M21 10.400v1.800" stroke-width="1.500"/></svg>
 <svg style="left:525px;top:14px" width="22" height="22" viewBox="0 0 22 22" fill="none" stroke="#4d535b" stroke-width="1.500"><path d="M11 1.200a9.800 9.800 0 1 0 0 19.600q2.600 0 2.600-2q0-1-.8-1.800q-.6-.8-.6-1.600q0-2 2.200-2h2.400q4 0 4-3.600q0-8.600-9.800-8.600Z"/><circle cx="6" cy="11" r="1.300"/><circle cx="8.200" cy="6.400" r="1.300"/><circle cx="13.200" cy="5.400" r="1.300"/><circle cx="16.800" cy="8.600" r="1.300"/></svg>
 <svg style="left:15px;top:61px" width="20" height="19" viewBox="0 0 20 19" fill="none" stroke="#d5d8dc" stroke-width="1.400"><path d="M14 5V.8H.8v12.600H5"/><rect x="5" y="5" width="14" height="13" /><path d="M12 8.400v6.200M8.900 11.500h6.200"/></svg>
 <svg style="left:56px;top:61px" width="19" height="18" viewBox="0 0 19 18" fill="none" stroke="#4fd8b4" stroke-width="1.700" stroke-linecap="round"><path d="M10.400 4l1.400-1.400a3.600 3.600 0 0 1 5 5L15.400 9M8.600 14l-1.400 1.400a3.600 3.600 0 0 1-5-5L3.600 9M6.600 11.600l5.800-5.200"/></svg>
 <svg style="left:0;top:0" width="1380" height="100" viewBox="0 0 1380 100"><path d="M160.5 75v15M184.7 82v8M208.9 82v8M233.1 82v8M257.3 82v8M281.5 75v15M305.7 82v8M329.9 82v8M354.1 82v8M378.3 82v8M402.5 75v15M426.7 82v8M450.9 82v8M475.1 82v8M499.3 82v8M523.5 75v15M547.7 82v8M571.9 82v8M596.1 82v8M620.3 82v8M644.5 75v15M668.7 82v8M692.9 82v8M717.1 82v8M741.3 82v8M765.5 75v15M789.7 82v8M813.9 82v8M838.1 82v8M862.3 82v8M886.5 75v15M910.7 82v8M934.9 82v8M959.1 82v8M983.3 82v8M1007.5 75v15M1031.7 82v8M1055.9 82v8M1080.1 82v8M1104.3 82v8M1128.5 75v15M1152.7 82v8M1176.9 82v8M1201.1 82v8M1225.3 82v8M1249.5 75v15M1273.7 82v8M1297.9 82v8M1322.1 82v8M1346.3 82v8M1370.5 75v15" stroke="#a9adb2" stroke-width="1"/></svg>
 <div class="abs" style="left:161px;top:55px;width:60px;height:22px;overflow:hidden"><div class="t" style="left:-41.200px;top:3px;font-size:15px;color:#d5d8dc;letter-spacing:.2px">00:00:00:00</div></div>
 <div class="t" style="left:221.5px;width:120px;text-align:center;top:58px;font-size:15px;color:#d5d8dc;letter-spacing:.2px">00:00:05:00</div>
 <div class="t" style="left:342.5px;width:120px;text-align:center;top:58px;font-size:15px;color:#d5d8dc;letter-spacing:.2px">00:00:10:00</div>
 <div class="t" style="left:463.5px;width:120px;text-align:center;top:58px;font-size:15px;color:#d5d8dc;letter-spacing:.2px">00:00:15:00</div>
 <div class="t" style="left:584.5px;width:120px;text-align:center;top:58px;font-size:15px;color:#d5d8dc;letter-spacing:.2px">00:00:20:00</div>
 <div class="t" style="left:705.5px;width:120px;text-align:center;top:58px;font-size:15px;color:#d5d8dc;letter-spacing:.2px">00:00:25:00</div>
 <div class="t" style="left:826.5px;width:120px;text-align:center;top:58px;font-size:15px;color:#d5d8dc;letter-spacing:.2px">00:00:30:00</div>
 <div class="t" style="left:947.5px;width:120px;text-align:center;top:58px;font-size:15px;color:#d5d8dc;letter-spacing:.2px">00:00:35:00</div>
 <div class="t" style="left:1068.5px;width:120px;text-align:center;top:58px;font-size:15px;color:#d5d8dc;letter-spacing:.2px">00:00:40:00</div>
 <div class="t" style="left:1189.5px;width:120px;text-align:center;top:58px;font-size:15px;color:#d5d8dc;letter-spacing:.2px">00:00:45:00</div>
 <div class="t" style="left:1310.5px;width:120px;text-align:center;top:58px;font-size:15px;color:#d5d8dc;letter-spacing:.2px">00:00:50:00</div>
 <div class="abs" style="left:160px;top:50px;width:1px;height:355px;background:#f26565"></div>
 <div class="abs" style="left:160px;top:50px;width:8px;height:12px;border-radius:0 0 5px 0;background:#f26565"></div>
 <div class="abs" style="left:160px;top:133px;width:14px;height:44px;border-radius:0 14px 14px 0 / 0 16px 16px 0;background:#f96464"></div>
 <svg style="left:160px;top:146px" width="10" height="16" viewBox="0 0 10 16" fill="none" stroke="#fff" stroke-width="1.200"><path d="M5.500 .5L.8 9"/><ellipse cx="4.400" cy="10.600" rx="3.600" ry="3.800"/></svg>
 <svg style="left:11px;top:189px" width="19" height="17" viewBox="0 0 19 17"><path d="M4.400 .4h10.200q4 0 4 4v8.200q0 4-4 4H4.400q-4 0-4-4V4.400q0-4 4-4Z" fill="#c6c9ce"/><path d="M.4 5.600h18.200M6 .4v5.200M13 .4v5.200" stroke="#20262b" stroke-width="1.300"/><path d="M7.400 8v5.800l4.800-2.900Z" fill="#20262b"/></svg>
 <div class="t" style="left:31px;top:189px;font-size:13px;color:#c6c9ce">4</div>
 <svg style="left:55px;top:190px" width="15" height="14" viewBox="0 0 15 14" fill="none" stroke="#d5d8dc" stroke-width="1.300"><path d="M2.600 5.600V3.400q0-2.600 2.600-2.600q2 0 2.400 1.600"/><rect x="1.400" y="5.600" width="12" height="7.600" rx=".8"/><rect x="6.600" y="8.600" width="1.600" height="1.600" fill="#d5d8dc" stroke="none"/></svg>
 <svg style="left:95px;top:190px" width="16" height="15" viewBox="0 0 16 15" fill="none" stroke="#e4e6e8" stroke-width="1.300" stroke-linejoin="round"><path d="M.8 4.800h2.800L7.800 1v13L3.600 10.200H.8Z"/><path d="M10 4.600q1.600 2.900 0 5.800M12.400 2.800q2.800 4.700 0 9.400" stroke-linecap="round"/></svg>
 <svg style="left:132px;top:192px" width="16" height="11" viewBox="0 0 16 11"><path d="M.8 5.500Q8-4 15.200 5.500Q8 15 .8 5.500Z" fill="none" stroke="#f2f3f4" stroke-width="1.400"/><circle cx="8" cy="5.500" r="2.400" fill="#f2f3f4"/></svg>
 <svg style="left:11px;top:229px" width="19" height="17" viewBox="0 0 19 17"><path d="M4.400 .4h10.200q4 0 4 4v8.200q0 4-4 4H4.400q-4 0-4-4V4.400q0-4 4-4Z" fill="#c6c9ce"/><path d="M.4 5.600h18.200M6 .4v5.200M13 .4v5.200" stroke="#20262b" stroke-width="1.300"/><path d="M7.400 8v5.800l4.800-2.900Z" fill="#20262b"/></svg>
 <div class="t" style="left:31px;top:229px;font-size:13px;color:#c6c9ce">3</div>
 <svg style="left:55px;top:230px" width="15" height="14" viewBox="0 0 15 14" fill="none" stroke="#d5d8dc" stroke-width="1.300"><path d="M2.600 5.600V3.400q0-2.600 2.600-2.600q2 0 2.400 1.600"/><rect x="1.400" y="5.600" width="12" height="7.600" rx=".8"/><rect x="6.600" y="8.600" width="1.600" height="1.600" fill="#d5d8dc" stroke="none"/></svg>
 <svg style="left:95px;top:230px" width="16" height="15" viewBox="0 0 16 15" fill="none" stroke="#e4e6e8" stroke-width="1.300" stroke-linejoin="round"><path d="M.8 4.800h2.800L7.800 1v13L3.600 10.200H.8Z"/><path d="M10 4.600q1.600 2.900 0 5.800M12.400 2.800q2.800 4.700 0 9.400" stroke-linecap="round"/></svg>
 <svg style="left:132px;top:232px" width="16" height="11" viewBox="0 0 16 11"><path d="M.8 5.500Q8-4 15.200 5.500Q8 15 .8 5.500Z" fill="none" stroke="#f2f3f4" stroke-width="1.400"/><circle cx="8" cy="5.500" r="2.400" fill="#f2f3f4"/></svg>
 <svg style="left:11px;top:269px" width="19" height="17" viewBox="0 0 19 17"><path d="M4.400 .4h10.200q4 0 4 4v8.200q0 4-4 4H4.400q-4 0-4-4V4.400q0-4 4-4Z" fill="#c6c9ce"/><path d="M.4 5.600h18.200M6 .4v5.200M13 .4v5.200" stroke="#20262b" stroke-width="1.300"/><path d="M7.400 8v5.800l4.800-2.900Z" fill="#20262b"/></svg>
 <div class="t" style="left:31px;top:269px;font-size:13px;color:#c6c9ce">2</div>
 <svg style="left:55px;top:270px" width="15" height="14" viewBox="0 0 15 14" fill="none" stroke="#d5d8dc" stroke-width="1.300"><path d="M2.600 5.600V3.400q0-2.600 2.600-2.600q2 0 2.400 1.600"/><rect x="1.400" y="5.600" width="12" height="7.600" rx=".8"/><rect x="6.600" y="8.600" width="1.600" height="1.600" fill="#d5d8dc" stroke="none"/></svg>
 <svg style="left:95px;top:270px" width="16" height="15" viewBox="0 0 16 15" fill="none" stroke="#e4e6e8" stroke-width="1.300" stroke-linejoin="round"><path d="M.8 4.800h2.800L7.800 1v13L3.600 10.200H.8Z"/><path d="M10 4.600q1.600 2.900 0 5.800M12.400 2.800q2.800 4.700 0 9.400" stroke-linecap="round"/></svg>
 <svg style="left:132px;top:272px" width="16" height="11" viewBox="0 0 16 11"><path d="M.8 5.500Q8-4 15.200 5.500Q8 15 .8 5.500Z" fill="none" stroke="#f2f3f4" stroke-width="1.400"/><circle cx="8" cy="5.500" r="2.400" fill="#f2f3f4"/></svg>
 <svg style="left:11px;top:320px" width="19" height="17" viewBox="0 0 19 17"><path d="M4.400 .4h10.200q4 0 4 4v8.200q0 4-4 4H4.400q-4 0-4-4V4.400q0-4 4-4Z" fill="#c6c9ce"/><path d="M.4 5.600h18.200M6 .4v5.200M13 .4v5.200" stroke="#20262b" stroke-width="1.300"/><path d="M7.400 8v5.800l4.800-2.900Z" fill="#20262b"/></svg>
 <div class="t" style="left:31px;top:320px;font-size:13px;color:#c6c9ce">1</div>
 <svg style="left:55px;top:321px" width="15" height="14" viewBox="0 0 15 14" fill="none" stroke="#d5d8dc" stroke-width="1.300"><path d="M2.600 5.600V3.400q0-2.600 2.600-2.600q2 0 2.400 1.600"/><rect x="1.400" y="5.600" width="12" height="7.600" rx=".8"/><rect x="6.600" y="8.600" width="1.600" height="1.600" fill="#d5d8dc" stroke="none"/></svg>
 <svg style="left:95px;top:321px" width="16" height="15" viewBox="0 0 16 15" fill="none" stroke="#e4e6e8" stroke-width="1.300" stroke-linejoin="round"><path d="M.8 4.800h2.800L7.800 1v13L3.600 10.200H.8Z"/><path d="M10 4.600q1.600 2.900 0 5.800M12.400 2.800q2.800 4.700 0 9.400" stroke-linecap="round"/></svg>
 <svg style="left:132px;top:323px" width="16" height="11" viewBox="0 0 16 11"><path d="M.8 5.500Q8-4 15.200 5.500Q8 15 .8 5.500Z" fill="none" stroke="#f2f3f4" stroke-width="1.400"/><circle cx="8" cy="5.500" r="2.400" fill="#f2f3f4"/></svg>
 <div class="t" style="left:15px;top:346px;font-size:13px;color:#9aa0a6">视频 1</div>
 <div class="abs" style="left:165px;top:388px;width:720px;height:2px;border-radius:2px 2px 0 0;background:linear-gradient(90deg,#1d473e 0,#1d473e 85%,rgba(29,71,62,0))"></div>
 <div class="abs" style="left:162px;top:390px;width:762px;height:15px;border-radius:7px;background:#49525b"></div>
 <div class="abs" style="left:162px;top:391px;width:13px;height:13px;border-radius:50%;background:#6b7480;border:1px solid #97a0aa"></div>
 <div class="abs" style="left:910px;top:391px;width:13px;height:13px;border-radius:50%;background:#6b7480;border:1px solid #97a0aa"></div>
 <div class="abs" style="left:1366px;top:90px;width:15px;height:300px;background:#1d2227"></div>
 <div class="abs" style="left:1367px;top:130px;width:13px;height:134px;border-radius:7px;background:#2b3138"></div>
</div>
<!--/TIMELINE-->
<!--METER-->
<div class="abs" id="meter" style="left:1396px;top:614px;width:130px;height:404px;background:#20262c"></div>
<div class="abs" style="left:1416px;top:640px;width:23px;height:351px;background:#0b1016"></div>
<div class="abs" style="left:1446px;top:640px;width:23px;height:351px;background:#0b1016"></div>
<div class="abs" style="left:1439px;top:640px;width:7px;height:351px;background:#23292f"></div>
<div class="abs" style="left:1415px;top:991px;width:70px;height:3px;background:#4b5158"></div>
<div class="abs" style="left:1474px;top:640px;width:2px;height:351px;background:#4b5158"></div>
<svg style="left:0;top:0" width="1920" height="1020" viewBox="0 0 1920 1020"><path d="M1469 863h15M1439 863h7M1469 895h15M1439 895h7M1469 927.5h15M1439 927.5h7M1469 958.5h15M1439 958.5h7" stroke="#4b5158" stroke-width="1.500"/><path d="M1476 869.4h4M1476 875.7h4M1476 882.1h4M1476 888.4h5M1476 901.2h4M1476 907.5h4M1476 913.9h4M1476 920.2h5M1476 933.0h4M1476 939.3h4M1476 945.7h4M1476 952.0h5M1476 964.8h4M1476 971.1h4M1476 977.5h4M1476 983.8h5" stroke="#4b5158" stroke-width="1.200"/></svg>
<div class="t" style="left:1490px;top:855.5px;font-size:15px;color:#c8ccd0">-36</div>
<div class="t" style="left:1490px;top:887.5px;font-size:15px;color:#c8ccd0">-42</div>
<div class="t" style="left:1490px;top:920.0px;font-size:15px;color:#c8ccd0">-48</div>
<div class="t" style="left:1490px;top:951.0px;font-size:15px;color:#c8ccd0">-54</div>
<div class="t" style="left:1490px;top:985px;font-size:15px;color:#c8ccd0">dB</div>
<div class="t" style="left:1423px;top:995px;font-size:14px;color:#c8ccd0">左</div>
<div class="t" style="left:1453px;top:995px;font-size:14px;color:#c8ccd0">右</div>
<!--/METER-->
<!--ANNOT-->
<div class="abs" style="left:223px;top:213px;width:234px;height:139px;border:4px solid #f5221b;border-radius:6px;z-index:50"></div>
<svg style="left:0;top:0;pointer-events:none;z-index:50" width="1920" height="1020" viewBox="0 0 1920 1020"><path d="M469 327.500L843.500 473.400L844.600 471.800L855.200 484.300L838.300 487L841.600 481.500L469 328.500Z" fill="#f5221b"/></svg>
<!--/ANNOT-->
<!--DIALOG-->
<div class="abs" id="dlg"><div class="abs" style="left:0;top:-1px;width:942px;height:592px">
 <!-- coords relative to dialog: x-650, y-270 -->
 <div class="abs" style="left:0;top:0;width:942px;height:38px;background:linear-gradient(90deg,#faeff0 0%,#f6f0f3 45%,#ecf3f8 75%,#e8f4f9 100%)"></div>
 <div class="abs" style="left:9px;top:9px;width:20px;height:20px;border-radius:4.500px;background:linear-gradient(180deg,#1b3a55,#142c40)"></div>
 <svg style="left:9px;top:9px" width="20" height="20" viewBox="0 0 20 20"><path d="M8 3.200l2 2l-2 2l-2-2Z" fill="#fff"/><path d="M11 6l3 3l-5.400 5.400l-3-3Z" fill="#55e0b8"/><rect x="7.500" y="16.400" width="5" height="1.400" rx=".5" fill="#dfe7ee"/></svg>
 <div class="t" style="left:35px;top:10px;font-size:15px;color:#1a1a1a">打开</div>
 <svg style="left:915px;top:13px" width="13" height="13" viewBox="0 0 13 13" fill="none" stroke="#1a1a1a" stroke-width="1.100"><path d="M.6.600l11.800 11.800M12.400.6L.6 12.400"/></svg>
 <!-- nav arrows -->
 <svg style="left:19px;top:62px" width="16" height="15" viewBox="0 0 16 15" fill="none" stroke="#9b9b9b" stroke-width="1.300"><path d="M7.600.8L.9 7.500l6.700 6.700M.9 7.500h14.800"/></svg>
 <svg style="left:63px;top:62px" width="16" height="15" viewBox="0 0 16 15" fill="none" stroke="#9b9b9b" stroke-width="1.300"><path d="M8.400.8l6.700 6.700l-6.700 6.700M15.100 7.500H.3"/></svg>
 <svg style="left:103px;top:66px" width="13" height="8" viewBox="0 0 13 8" fill="none" stroke="#a6a6a6" stroke-width="1.300"><path d="M.8.800l5.700 5.700L12.200.8"/></svg>
 <svg style="left:138px;top:62px" width="15" height="16" viewBox="0 0 15 16" fill="none" stroke="#5a5a5a" stroke-width="1.300"><path d="M.8 7.500L7.500.8l6.700 6.700M7.500.8v15"/></svg>
 <!-- address box -->
 <div class="abs" style="left:172px;top:48px;width:493px;height:44px;border:1px solid #d9d9d9;background:#fff"></div>
 <svg style="left:183px;top:62px" width="19" height="15" viewBox="0 0 19 15"><path d="M.5 1.600Q.5.500 1.600.5h4.800l1.800 1.800H.5Z" fill="#e8a92e"/><path d="M.5 2.300h16.900q1.100 0 1.100 1.100v9.500q0 1.100-1.100 1.100H1.600Q.5 14 .5 12.900Z" fill="#ffd768"/><path d="M.5 12.600h18v.3q0 1.100-1.100 1.100H1.600Q.5 14 .5 12.900Z" fill="#f2b83c"/></svg>
 <div class="t" style="left:210px;top:60px;font-size:15px;color:#555">«</div>
 <div class="t" id="adr1" style="left:228px;top:62px;font-size:15px;color:#111;letter-spacing:.56px">Wondershare Filmora</div>
 <svg style="left:394px;top:65px" width="6" height="10" viewBox="0 0 6 10" fill="none" stroke="#555" stroke-width="1.200"><path d="M.8.800l4 4.200l-4 4.200"/></svg>
 <div class="t" id="adr2" style="left:411px;top:62px;font-size:15px;color:#111;letter-spacing:.47px">Preset Video</div>
 <svg style="left:586px;top:67px" width="14" height="9" viewBox="0 0 14 9" fill="none" stroke="#4a4a4a" stroke-width="1.400"><path d="M.8.800l6.200 6.400L13.200.8"/></svg>
 <svg style="left:631px;top:62px" width="18" height="18" viewBox="0 0 18 18" fill="none" stroke="#5a5a5a" stroke-width="1.400"><path d="M15.600 9a6.800 6.800 0 1 1-2.400-5.200"/><path d="M13.800.6v3.800H10" stroke-linejoin="round"/></svg>
 <!-- search box -->
 <div class="abs" style="left:677px;top:48px;width:253px;height:44px;border:1px solid #d9d9d9;background:#fff"></div>
 <div class="t" id="srch" style="left:686px;top:62px;font-size:15px;color:#767676;letter-spacing:.42px">在 Preset Video 中搜索</div>
 <svg style="left:896px;top:63px" width="15" height="15" viewBox="0 0 15 15" fill="none" stroke="#6a6a6a" stroke-width="1.500"><circle cx="9.600" cy="5.400" r="4"/><path d="M6.600 8.400L.8 14.200"/></svg>
 <!-- command bar -->
 <div class="abs" style="left:0;top:103px;width:942px;height:38px;background:#f4f5f7;border-bottom:1px solid #e4e4e4"></div>
 <div class="t" style="left:22px;top:115px;font-size:15px;color:#1f3a63">组织</div>
 <svg style="left:57px;top:120px" width="9" height="5" viewBox="0 0 9 5"><path d="M0 0h9L4.500 5Z" fill="#1f3a63"/></svg>
 <div class="t" style="left:101px;top:115px;font-size:15px;color:#1f3a63">新建文件夹</div>
 <svg style="left:791px;top:115px" width="16" height="15" viewBox="0 0 16 15" fill="none" stroke="#111" stroke-width="1.300"><rect x="1.400" y=".7" width="12.600" height="10.600" fill="#fff"/><path d="M1 13.800h13.600" stroke="#555" stroke-width="1"/></svg>
 <svg style="left:821px;top:119px" width="9" height="5" viewBox="0 0 9 5"><path d="M0 0h9L4.500 5Z" fill="#1f3a63"/></svg>
 <svg style="left:857px;top:114px" width="19" height="16" viewBox="0 0 19 16"><defs><linearGradient id="pg" x1="0" y1="0" x2="1" y2="0"><stop offset="0" stop-color="#4da3e8"/><stop offset="1" stop-color="#0f6fce"/></linearGradient></defs><rect x=".7" y=".7" width="17.600" height="14.600" fill="#fff" stroke="#111" stroke-width="1.300"/><rect x="10.200" y="1.400" width="7.400" height="13.200" fill="url(#pg)"/></svg>
 <svg style="left:903px;top:112px" width="21" height="21" viewBox="0 0 21 21"><defs><linearGradient id="hg" x1="0" y1="0" x2="0" y2="1"><stop offset="0" stop-color="#2a95ea"/><stop offset="1" stop-color="#0a6fd0"/></linearGradient></defs><circle cx="10.500" cy="10.500" r="10" fill="url(#hg)"/><text x="10.500" y="15.500" text-anchor="middle" font-family="Liberation Sans, sans-serif" font-size="14" fill="#fff">?</text></svg>
 <!-- nav pane -->
 <div class="abs" style="left:175px;top:142px;width:20px;height:348px;background:#f0f0f0"></div>
 <div class="abs" style="left:196px;top:142px;width:1px;height:348px;background:#f0f0f0"></div>
 <div class="abs" style="left:182px;top:163px;width:6px;height:120px;background:#8a8a8a"></div>
 <div class="abs" style="left:3px;top:270px;width:172px;height:40px;border-radius:4px 0 0 4px;background:#d9d9d9"></div>
 <div class="abs" style="left:13px;top:330px;width:151px;height:1px;background:#d4d4d4"></div>
 <svg style="left:19px;top:164px" width="7" height="11" viewBox="0 0 7 11" fill="none" stroke="#6a6a6a" stroke-width="1.200"><path d="M.8.800l4.800 4.700l-4.800 4.700"/></svg>
 <svg style="left:19px;top:284px" width="7" height="11" viewBox="0 0 7 11" fill="none" stroke="#6a6a6a" stroke-width="1.200"><path d="M.8.800l4.800 4.700l-4.800 4.700"/></svg>
 <!-- icons -->
 <svg style="left:42px;top:162px" width="21" height="15" viewBox="0 0 21 15"><defs><linearGradient id="w1" x1="0" y1="1" x2="1" y2="0"><stop offset="0" stop-color="#3fd8a8"/><stop offset=".45" stop-color="#1ea2f2"/><stop offset="1" stop-color="#2a66f0"/></linearGradient></defs><path d="M5.200 14.500a4.600 4.600 0 0 1-.8-9.100a6.200 6.200 0 0 1 11.600.6a4.200 4.200 0 0 1 .8 8.500Z" fill="url(#w1)"/><path d="M.8 10q1.600-4.400 6-4l4.800 8.500H5.200Q.8 14.300.8 10Z" fill="#35d6b4" opacity=".8"/></svg>
 <svg style="left:43px;top:200px" width="20" height="20" viewBox="0 0 20 20"><defs><linearGradient id="hm" x1="0" y1="0" x2="0" y2="1"><stop offset="0" stop-color="#c9c9c9"/><stop offset="1" stop-color="#9d9d9d"/></linearGradient></defs><path d="M2 9.500L10 2.600l8 6.900v9q0 1-1 1h-4v-6H7v6H3q-1 0-1-1Z" fill="url(#hm)"/><path d="M.9 10.200L10 1.800l9.100 8.400" fill="none" stroke="#e5822a" stroke-width="2.300" stroke-linecap="round" stroke-linejoin="round"/></svg>
 <svg style="left:43px;top:240px" width="20" height="20" viewBox="0 0 20 20"><rect x="3" y="3" width="16" height="16" rx="2.500" fill="#8ec2ee"/><rect x=".8" y=".8" width="16" height="16" rx="2.500" fill="#1b86dc"/><path d="M1 15.500l6.500-6.500l8 7.800H3q-2 0-2-1.300Z" fill="#fff"/><circle cx="12.200" cy="5.400" r="1.600" fill="#fff"/></svg>
 <svg style="left:42px;top:283px" width="21" height="14" viewBox="0 0 21 14"><path d="M5.200 13.500a4.400 4.400 0 0 1-1-8.600a6 6 0 0 1 11-.4a4.500 4.500 0 0 1 1.400 9Z" fill="#1577d8"/><path d="M2.600 6.500q4-2.600 8.600 1.500l8 4.400q-1 1.100-2.600 1.100H5.200Q.8 13.500.8 9.600q0-1.900 1.800-3.100Z" fill="#2aa0f0"/><path d="M9 3.200q3-3.200 6.200 1.300q-2 .2-4 3.500Z" fill="#0f5cb8" opacity=".7"/></svg>
 <svg style="left:43px;top:362px" width="20" height="16" viewBox="0 0 20 16"><defs><linearGradient id="d1" x1="0" y1="0" x2="1" y2="1"><stop offset="0" stop-color="#3fc6ec"/><stop offset="1" stop-color="#1583c8"/></linearGradient></defs><rect x=".5" y=".5" width="19" height="14.500" rx="1.800" fill="url(#d1)"/><rect x="2" y="2.200" width="1.400" height="2.600" fill="#fff" opacity=".9"/><rect x="16" y="13.600" width="3" height="1.400" fill="#0d5c98"/></svg>
 <svg style="left:46px;top:401px" width="15" height="19" viewBox="0 0 15 19" fill="none" stroke="#1aa877" stroke-width="1.600"><path d="M7.500.5v13.500M1.800 8.600l5.700 5.700l5.700-5.700M.8 18h13.400"/></svg>
 <svg style="left:46px;top:440px" width="15" height="20" viewBox="0 0 15 20"><defs><linearGradient id="dc" x1="0" y1="0" x2="1" y2="1"><stop offset="0" stop-color="#a9bddc"/><stop offset="1" stop-color="#7d95bb"/></linearGradient></defs><rect x=".5" y=".5" width="14" height="19" rx="1.800" fill="url(#dc)"/><path d="M3 6h5M3 8.500h9M3 11h9M3 13.500h9" stroke="#fff" stroke-width="1"/><rect x="9" y="5" width="3" height="2.200" fill="#fff"/></svg>
 <svg style="left:43px;top:480px" width="20" height="12" viewBox="0 0 20 12"><rect x=".8" y=".8" width="18" height="16" rx="2.500" fill="#1b86dc"/><circle cx="13.200" cy="5.400" r="1.600" fill="#fff"/></svg>
 <!-- labels -->
 <div class="t nl" style="left:68px;top:162px">WPS云盘</div>
 <div class="t nl" style="left:68px;top:203px">主文件夹</div>
 <div class="t nl" style="left:68px;top:243px">图库</div>
 <div class="t nl" id="od" style="left:68px;top:283px;font-size:15px;letter-spacing:.4px">OneDrive - Per</div>
 <div class="t nl" style="left:68px;top:363px">桌面</div>
 <div class="t nl" style="left:68px;top:403px">下载</div>
 <div class="t nl" style="left:68px;top:443px">文档</div>
 <div class="t nl" style="left:68px;top:483px">图片</div>
 <!-- pins -->
 <svg class="pin" style="left:157px;top:363px" width="14" height="14" viewBox="0 0 14 14"><path d="M8.600 1.400l4.200 4.200l-1.400.6l-2.600 2.600l-.4 2.800L3.600 6.800l2.800-.4l2.600-2.600Z" fill="#8c9198" stroke="#8c9198" stroke-width="1.500" stroke-linejoin="round"/><path d="M5.600 8.600L1 13.200" stroke="#8c9198" stroke-width="1.600"/></svg>
 <svg class="pin" style="left:157px;top:403px" width="14" height="14" viewBox="0 0 14 14"><path d="M8.600 1.400l4.200 4.200l-1.400.6l-2.600 2.600l-.4 2.800L3.600 6.800l2.800-.4l2.600-2.600Z" fill="#8c9198" stroke="#8c9198" stroke-width="1.500" stroke-linejoin="round"/><path d="M5.600 8.600L1 13.200" stroke="#8c9198" stroke-width="1.600"/></svg>
 <svg class="pin" style="left:157px;top:443px" width="14" height="14" viewBox="0 0 14 14"><path d="M8.600 1.400l4.200 4.200l-1.400.6l-2.600 2.600l-.4 2.800L3.600 6.800l2.800-.4l2.600-2.600Z" fill="#8c9198" stroke="#8c9198" stroke-width="1.500" stroke-linejoin="round"/><path d="M5.600 8.600L1 13.200" stroke="#8c9198" stroke-width="1.600"/></svg>
 <svg class="pin" style="left:157px;top:483px" width="14" height="14" viewBox="0 0 14 14"><path d="M8.600 1.400l4.200 4.200l-1.400.6l-2.600 2.600l-.4 2.800L3.600 6.800l2.800-.4l2.600-2.600Z" fill="#8c9198" stroke="#8c9198" stroke-width="1.500" stroke-linejoin="round"/><path d="M5.600 8.600L1 13.200" stroke="#8c9198" stroke-width="1.600"/></svg>
 <!-- file item -->
 <svg style="left:224px;top:206px" width="116" height="63" viewBox="0 0 116 63"><defs><linearGradient id="fs" x1="0" y1="0" x2="0" y2="1"><stop offset="0" stop-color="#84aee6"/><stop offset=".6" stop-color="#9cc3f2"/><stop offset="1" stop-color="#b6d3f5"/></linearGradient><linearGradient id="fb" x1="0" y1="0" x2="0" y2="1"><stop offset="0" stop-color="#5a5a5a"/><stop offset=".5" stop-color="#727272"/><stop offset="1" stop-color="#4e4e4e"/></linearGradient><filter id="bf" x="-10%" y="-10%" width="120%" height="120%"><feGaussianBlur stdDeviation=".7"/></filter></defs>
  <rect x="0" y="0" width="116" height="63" rx="3" fill="url(#fb)"/>
  <rect x="13" y="0" width="90" height="63" fill="#2e2e2e"/>
  <rect x="14" y="3" width="88" height="57.500" fill="url(#fs)"/>
  <g filter="url(#bf)"><path d="M62 30q6-3 12 0t9 5q5-2 9 4q-8 5-17 2t-15-6Z" fill="#eef4fb"/><path d="M64 60.500q8-13 24-14.500t14 3v11.500Z" fill="#707780"/><path d="M17 9.500l3-1.200l10 5l8 3.500q5 3 7 9l1.500 9l-3 6h-7l-1-9l-3-8l-7-6Z" fill="#39434d"/><path d="M37 38l8 1l4 8l3 13.500h-4.500l-4-9l-1.500 9h-5l1-14Z" fill="#4f74a8"/><circle cx="32.500" cy="25.500" r="2.600" fill="#b98f78"/></g>
  <rect x="2.600" y="3.2" width="8" height="7" rx="1.800" fill="#fff"/><rect x="105.600" y="3.2" width="8" height="7" rx="1.800" fill="#fff"/><rect x="2.600" y="15.4" width="8" height="7" rx="1.800" fill="#fff"/><rect x="105.600" y="15.4" width="8" height="7" rx="1.800" fill="#fff"/><rect x="2.600" y="27.6" width="8" height="7" rx="1.800" fill="#fff"/><rect x="105.600" y="27.6" width="8" height="7" rx="1.800" fill="#fff"/><rect x="2.600" y="39.8" width="8" height="7" rx="1.800" fill="#fff"/><rect x="105.600" y="39.8" width="8" height="7" rx="1.800" fill="#fff"/><rect x="2.600" y="52.0" width="8" height="7" rx="1.800" fill="#fff"/><rect x="105.600" y="52.0" width="8" height="7" rx="1.800" fill="#fff"/></svg>
 <div class="t" id="ug" style="left:224px;width:119px;text-align:center;top:275.500px;font-size:15px;color:#111;letter-spacing:.65px">user guide</div>
 <!-- bottom -->
 <div class="abs" style="left:0;top:491px;width:942px;height:101px;background:#f0f0f0"></div>
 <div class="t" style="left:168px;top:514px;font-size:15px;color:#111">文件名(<u>N</u>):</div>
 <div class="abs" style="left:247px;top:507px;width:423px;height:29px;border:1px solid #0a74d4;border-radius:3px;background:#fff"></div>
 <svg style="left:652px;top:518px" width="11" height="7" viewBox="0 0 11 7" fill="none" stroke="#444" stroke-width="1.100"><path d="M.8.800l4.700 4.800L10.200.8"/></svg>
 <div class="abs" style="left:684px;top:507px;width:235px;height:28px;border:1px solid #c9c9c9;border-radius:2px;background:#fff"></div>
 <div class="abs" style="left:688px;top:509px;width:206px;height:24px;overflow:hidden"><div class="t" id="flt" style="left:0;top:5px;font-size:15px;color:#111;letter-spacing:.5px">All supported files(*.MP4;*.FLV;*.AVI)</div></div>
 <svg style="left:903px;top:518px" width="11" height="7" viewBox="0 0 11 7" fill="none" stroke="#444" stroke-width="1.100"><path d="M.8.800l4.700 4.800L10.200.8"/></svg>
 <div class="abs" style="left:685px;top:544px;width:108px;height:31px;border:1px solid #0a67c0;border-radius:4px;background:#fdfdfd"></div>
 <div class="t" style="left:702px;top:552px;font-size:15px;color:#111">打开(<u>O</u>)</div>
 <div class="abs" style="left:774px;top:548px;width:1.500px;height:23px;background:#444"></div>
 <svg style="left:779px;top:556px" width="10" height="6" viewBox="0 0 10 6"><path d="M0 0h10L5 6Z" fill="#111"/></svg>
 <div class="abs" style="left:810px;top:544px;width:108px;height:31px;border:1px solid #d2d2d2;border-radius:4px;background:#fdfdfd"></div>
 <div class="t" style="left:849px;top:552px;font-size:15px;color:#111">取消</div>
 <svg style="left:929px;top:578px" width="10" height="10" viewBox="0 0 10 10" fill="#b4b4b4"><rect x="7" y="0" width="2" height="2"/><rect x="4" y="3" width="2" height="2"/><rect x="7" y="3" width="2" height="2"/><rect x="1" y="6" width="2" height="2"/><rect x="4" y="6" width="2" height="2"/><rect x="7" y="6" width="2" height="2"/></svg>
</div></div>
<!--/DIALOG-->
</body>
</html>
